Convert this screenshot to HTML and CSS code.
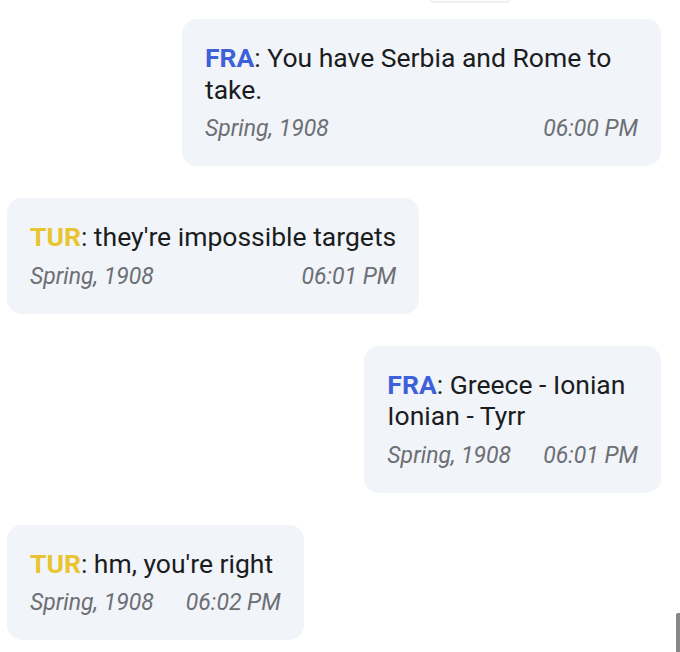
FILE: index.html
```html
<!DOCTYPE html>
<html>
<head>
<meta charset="utf-8">
<link rel="stylesheet" href="styles.css">
</head>
<body>
<div class="chat">
  <div class="top-chip"></div>
  <div class="msg out">
    <div class="text"><span class="who fra">FRA</span>: You have Serbia and Rome to take.</div>
    <div class="meta"><span>Spring, 1908</span><span>06:00 PM</span></div>
  </div>
  <div class="msg in">
    <div class="text"><span class="who tur">TUR</span>: they're impossible targets</div>
    <div class="meta"><span>Spring, 1908</span><span>06:01 PM</span></div>
  </div>
  <div class="msg out">
    <div class="text"><span class="who fra">FRA</span>: Greece - Ionian<br>Ionian - Tyrr</div>
    <div class="meta"><span>Spring, 1908</span><span>06:01 PM</span></div>
  </div>
  <div class="msg in">
    <div class="text"><span class="who tur">TUR</span>: hm, you're right</div>
    <div class="meta"><span>Spring, 1908</span><span>06:02 PM</span></div>
  </div>
  <div class="scrollbar"></div>
</div>
</body>
</html>
```

FILE: styles.css
```css
html, body {
  margin: 0;
  padding: 0;
  background: #ffffff;
}
body {
  font-family: Roboto, "Noto Sans", sans-serif;
  width: 680px;
  height: 652px;
  overflow: hidden;
}
.chat {
  position: relative;
  height: 652px;
  padding: 19px 19px 0 7px;
  box-sizing: border-box;
  display: flex;
  flex-direction: column;
  gap: 32px;
}
.top-chip {
  position: absolute;
  left: 430px;
  top: -30px;
  width: 80px;
  height: 31px;
  border-radius: 4px;
  background: #ffffff;
  box-shadow: 0 1px 3px rgba(0,0,0,0.12);
}
.msg {
  background: #f1f4f8;
  border-radius: 15px;
  padding: 23px 23px 23px 23px;
  max-width: 479px;
  box-sizing: border-box;
}
.msg.out {
  align-self: flex-end;
}
.msg.in {
  align-self: flex-start;
}
.text {
  font-size: 26.5px;
  line-height: 31.5px;
  color: #1b1c1e;
}
.who {
  font-weight: 700;
}
.who.fra {
  color: #3e60d8;
}
.who.tur {
  color: #e7c430;
}
.meta {
  display: flex;
  justify-content: space-between;
  gap: 32px;
  margin-top: 10px;
  font-size: 23px;
  line-height: 28px;
  font-style: italic;
  color: #6c6f75;
}
.scrollbar {
  position: absolute;
  right: 0;
  top: 613px;
  width: 4px;
  height: 40px;
  background: #888888;
  border-radius: 2px 0 0 0;
}
```
